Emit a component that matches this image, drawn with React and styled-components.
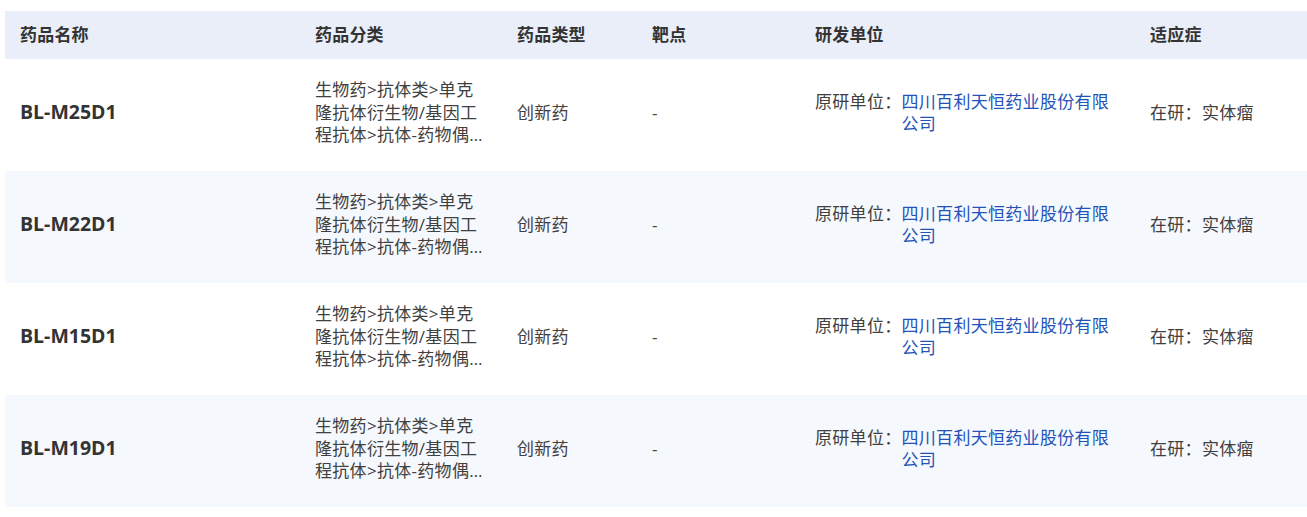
import React from 'react';
import styled, { createGlobalStyle } from 'styled-components';

const GlobalStyle = createGlobalStyle`
    * {
        box-sizing: border-box;
    }
    body {
        margin: 0;
        background: #FFFFFF;
        overflow: hidden;
        font-family: "Open Sans", "Noto Sans CJK SC", sans-serif;
        color: #333333;
    }
`

const drugs = [
    { name: "BL-M25D1" },
    { name: "BL-M22D1" },
    { name: "BL-M15D1" },
    { name: "BL-M19D1" },
];

const CATEGORY = "生物药>抗体类>单克隆抗体衍生物/基因工程抗体>抗体-药物偶联物(ADC)";
const COMPANY = "四川百利天恒药业股份有限公司";

export default function App() {
    return (
        <Page>
            <GlobalStyle />
            <Table>
                <colgroup>
                    <col style={{ width: 295 }} />
                    <col style={{ width: 202 }} />
                    <col style={{ width: 135 }} />
                    <col style={{ width: 163 }} />
                    <col style={{ width: 335 }} />
                    <col />
                </colgroup>
                <thead>
                    <tr>
                        <HeadCell>药品名称</HeadCell>
                        <HeadCell>药品分类</HeadCell>
                        <HeadCell>药品类型</HeadCell>
                        <HeadCell>靶点</HeadCell>
                        <HeadCell>研发单位</HeadCell>
                        <HeadCell>适应症</HeadCell>
                    </tr>
                </thead>
                <tbody>
                    {drugs.map((drug, i) => (
                        <Row key={drug.name} $striped={i % 2 === 1}>
                            <Cell><DrugName>{drug.name}</DrugName></Cell>
                            <Cell $padRight={17}><Category>{CATEGORY}</Category></Cell>
                            <Cell>创新药</Cell>
                            <Cell>-</Cell>
                            <Cell>
                                <Company>
                                    <CompanyLabel>原研单位：</CompanyLabel>
                                    <CompanyLink href="#">{COMPANY}</CompanyLink>
                                </Company>
                            </Cell>
                            <Cell>在研：实体瘤</Cell>
                        </Row>
                    ))}
                </tbody>
            </Table>
        </Page>
    )
}

const Page = styled.main`
    padding: 11px 0 0 5px;
`
const Table = styled.table`
    width: 1310px;
    table-layout: fixed;
    border-collapse: collapse;
    border-spacing: 0;
`
const HeadCell = styled.th`
    height: 48px;
    padding: 0 15px 3px;
    text-align: left;
    font-size: 17px;
    letter-spacing: 0.2px;
    font-weight: 700;
    color: #333333;
    background: #E9EEF8;
`
const Row = styled.tr`
    background: ${props => props.$striped ? "#F5F8FD" : "#FFFFFF"};
`
const Cell = styled.td`
    height: 112px;
    padding: 0 ${props => props.$padRight ?? 15}px 4px 15px;
    vertical-align: middle;
    font-size: 17px;
    letter-spacing: 0.3px;
    line-height: 22.5px;
    color: #404040;
`
const DrugName = styled.span`
    font-size: 19.5px;
    letter-spacing: 0;
    font-weight: 700;
    color: #333333;
`
const Category = styled.div`
    display: -webkit-box;
    -webkit-box-orient: vertical;
    -webkit-line-clamp: 3;
    overflow: hidden;
    word-break: break-all;
`
const Company = styled.div`
    display: flex;
    align-items: flex-start;
`
const CompanyLabel = styled.span`
    flex-shrink: 0;
`
const CompanyLink = styled.a`
    color: #2352B8;
    text-decoration: none;
    max-width: 218px;
`
